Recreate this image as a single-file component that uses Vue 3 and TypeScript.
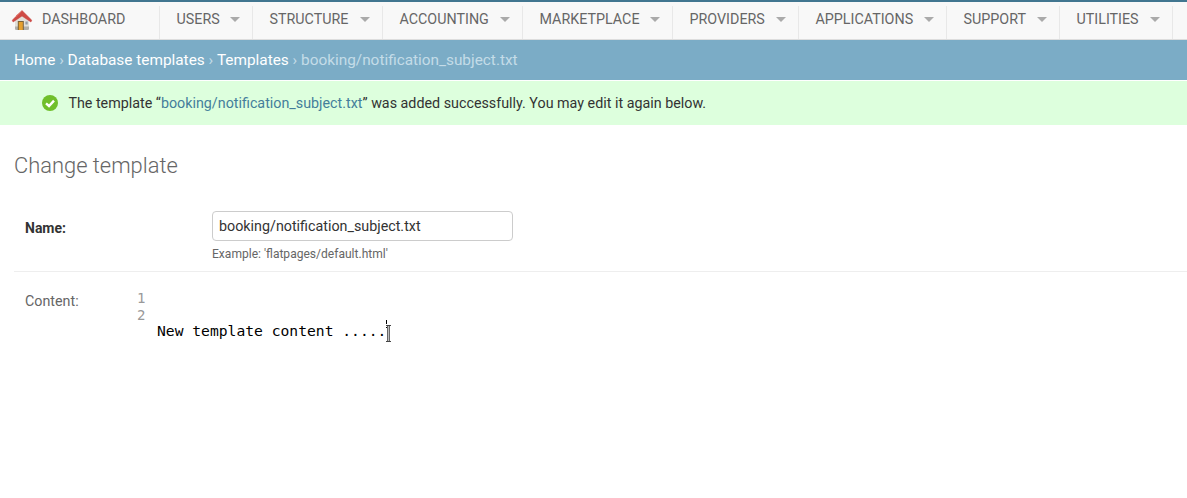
<script setup lang="ts">
const menus: { label: string; width: number }[] = [
  { label: 'Users', width: 93 },
  { label: 'Structure', width: 130 },
  { label: 'Accounting', width: 140 },
  { label: 'Marketplace', width: 150 },
  { label: 'Providers', width: 126 },
  { label: 'Applications', width: 148 },
  { label: 'Support', width: 113 },
  { label: 'Utilities', width: 113 },
]
</script>

<template>
  <div class="page">
    <nav class="nav">
      <a class="brand">
        <svg class="house" width="22" height="22" viewBox="0 0 22 22">
          <path d="M4 10v9.5a1.5 1.5 0 0 0 1.5 1.5h11a1.5 1.5 0 0 0 1.5-1.5V10L11 4z" fill="#e2dfd8" />
          <path d="M4 17.5h14v2a1.5 1.5 0 0 1-1.5 1.5h-11A1.5 1.5 0 0 1 4 19.5z" fill="#b0afab" />
          <path d="M1.2 11.2 11 1.5l9.8 9.7-.9 1.8L11 7 2.1 13z" fill="#cf4a45" stroke="#c43f3a" stroke-width=".5" stroke-linejoin="round" />
          <path d="M11 2 5 8V6.6L11 1.8z" fill="#e2756b" />
          <rect x="6.8" y="12" width="6" height="9" fill="#7b6238" />
          <rect x="7.8" y="13" width="4" height="8" fill="#e6a02e" />
          <rect x="14.4" y="12.5" width="2.3" height="3" fill="#929ca5" />
        </svg>
        <span>Dashboard</span>
      </a>
      <a v-for="m in menus" :key="m.label" class="menu" :style="{ width: m.width + 'px' }">
        <span>{{ m.label }}</span>
        <i class="arrow"></i>
      </a>
    </nav>

    <div class="crumbs">
      <a>Home</a><span class="sep"> › </span><a>Database templates</a><span class="sep"> › </span><a>Templates</a><span class="sep"> › </span><span class="current">booking/notification_subject.txt</span>
    </div>

    <div class="message">
      <svg width="16" height="16" viewBox="0 0 16 16">
        <circle cx="8" cy="8" r="8" fill="#70bf2b" />
        <path d="M4 8.3 7 11l5-5.4" fill="none" stroke="#fff" stroke-width="2.4" />
      </svg>
      <p>The template “<a>booking/notification_subject.txt</a>” was added successfully. You may edit it again below.</p>
    </div>

    <main class="content">
      <h1>Change template</h1>
      <div class="row row-name">
        <label class="name-label">Name:</label>
        <div class="field">
          <input type="text" value="booking/notification_subject.txt" />
          <p class="help">Example: 'flatpages/default.html'</p>
        </div>
      </div>
      <div class="row row-content">
        <label class="content-label">Content:</label>
        <div class="gutter"><span>1</span><span>2</span></div>
        <div class="editor">
          New template content .....
          <i class="caret"></i>
          <svg class="ibeam" width="7" height="19" viewBox="0 0 7 19">
            <path d="M.5 1.5h6M.5 17.5h6M3.5 1.5v16" stroke="#fff" stroke-width="3" fill="none" />
            <path d="M1 1.5h5M1 17.5h5M2.7 2v15M4.3 2v15" stroke="#444" stroke-width="1" fill="none" />
          </svg>
        </div>
      </div>
    </main>
  </div>
</template>

<style>
html,
body {
  margin: 0;
  background: #fff;
}
</style>

<style scoped>
.page {
  width: 1187px;
  height: 498px;
  overflow: hidden;
  background: #fff;
  font-family: Roboto, sans-serif;
  font-size: 14.3px;
  color: #333;
}
.nav {
  display: flex;
  height: 38px;
  background: #f8f8f8;
  border-top: 1px solid #417690;
  border-bottom: 1px solid #ddd;
  box-shadow: inset 0 1px 0 #417690;
}
.brand {
  box-sizing: border-box;
  width: 159px;
  display: flex;
  align-items: center;
  padding: 0 0 2px 11px;
  gap: 9px;
  color: #666;
  text-transform: uppercase;
  flex: none;
}
.house {
  flex: none;
  margin-top: 2px;
}
.menu {
  box-sizing: border-box;
  flex: none;
  display: flex;
  align-items: center;
  justify-content: space-between;
  margin: 5px 0 0;
  padding: 0 12px 7px 16.5px;
  border-left: 1px solid #e8e8e8;
  color: #666;
  text-transform: uppercase;
}
.arrow {
  width: 0;
  height: 0;
  border-left: 5px solid transparent;
  border-right: 5px solid transparent;
  border-top: 5px solid #aaa;
}
.nav::after {
  content: '';
  width: 1px;
  margin-top: 5px;
  background: #e8e8e8;
}
.crumbs {
  height: 40px;
  box-sizing: border-box;
  padding: 0 14px;
  display: flex;
  align-items: center;
  white-space: pre;
  background: #7bacc6;
  color: #c4dce8;
  font-size: 15.36px;
}
.crumbs a {
  color: #fff;
}
.sep {
  color: #c4dce8;
}
.current {
  color: #c4dce8;
}
.message {
  margin-top: 1px;
  height: 44px;
  display: flex;
  align-items: center;
  gap: 10.4px;
  padding-left: 42px;
  background: #dfd;
}
.message p {
  margin: 0;
  color: #333;
}
.message a {
  color: #447e9b;
}
.content {
  padding: 0 0 0 14px;
}
h1 {
  margin: 0;
  padding-top: 28px;
  font-size: 21.9px;
  line-height: 26px;
  font-weight: 300;
  color: #666;
}
.row {
  display: flex;
}
.row-name {
  margin-top: 32px;
  height: 60px;
  border-bottom: 1px solid #eee;
}
.name-label {
  width: 198px;
  padding: 9px 0 0 11px;
  box-sizing: border-box;
  line-height: 16px;
  font-size: 14px;
  font-weight: 700;
  color: #333;
}
.field {
  display: flex;
  flex-direction: column;
}
input {
  box-sizing: border-box;
  width: 301px;
  height: 30px;
  padding: 0 6px;
  border: 1px solid #ccc;
  border-radius: 4px;
  font: 14.3px Roboto, sans-serif;
  color: #333;
  background: #fff;
}
.help {
  margin: 6px 0 0;
  font-size: 12.05px;
  line-height: 14px;
  color: #666;
}
.row-content {
  padding-top: 18px;
}
.content-label {
  width: 123px;
  padding: 3px 0 0 11px;
  box-sizing: border-box;
  line-height: 16px;
  color: #666;
}
.gutter {
  display: flex;
  flex-direction: column;
  width: 20px;
  font-family: 'DejaVu Sans Mono', monospace;
  font-size: 14px;
  line-height: 17px;
  color: #999;
}
.editor {
  position: relative;
  margin-top: 32px;
  font-family: 'DejaVu Sans Mono', monospace;
  font-size: 14.67px;
  line-height: 17px;
  color: #000;
  white-space: nowrap;
}
.caret {
  position: absolute;
  left: 229px;
  top: -2px;
  width: 1px;
  height: 8px;
  background: #000;
}
.ibeam {
  position: absolute;
  left: 228px;
  top: 2px;
}
</style>
